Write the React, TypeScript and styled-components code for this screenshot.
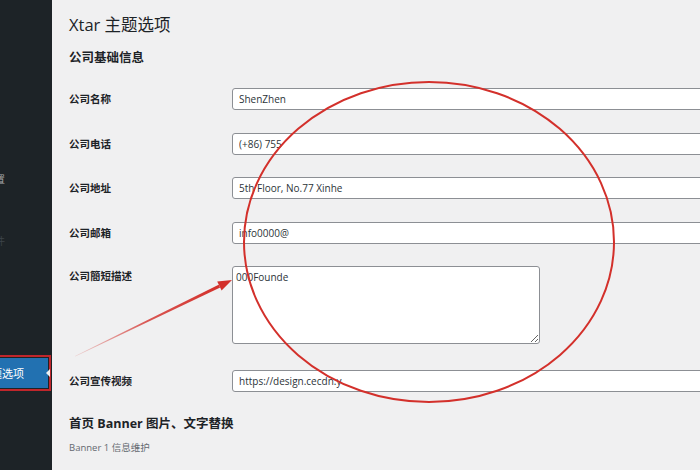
import styled, { createGlobalStyle } from "styled-components";

const GlobalStyle = createGlobalStyle`
  html,
  body {
    margin: 0;
    padding: 0;
    background: #f0f0f1;
    overflow: hidden;
  }

  * {
    box-sizing: border-box;
  }
`;

const FONT = `"Open Sans", "Noto Sans", "Noto Sans CJK SC", sans-serif`;
const RED = "#d3302b";

const fields = [
  { label: "公司名称", value: "ShenZhen" },
  { label: "公司电话", value: "(+86) 755" },
  { label: "公司地址", value: "5th Floor, No.77 Xinhe" },
  { label: "公司邮箱", value: "info0000@" },
];

const PageStyles = styled.div`
  position: relative;
  display: flex;
  width: 700px;
  height: 470px;
  overflow: hidden;
  font-family: ${FONT};
  color: #1d2327;
`;

const SidebarStyles = styled.nav`
  width: 52px;
  flex-shrink: 0;
  background: #1d2327;
  display: flex;
  flex-direction: column;
  padding-top: 170px;
  overflow: hidden;
`;

const FaintItem = styled.div<{ $gap: number; $tone: string }>`
  height: 16px;
  margin-top: ${(p) => p.$gap}px;
  display: flex;
  justify-content: flex-end;
  align-items: center;
  padding-right: 47px;
  font-size: 10px;
  white-space: nowrap;
  color: ${(p) => p.$tone};
`;

const CurrentItem = styled.div`
  position: relative;
  width: 48px;
  height: 30px;
  margin-top: 110px;
  background: #2271b1;
  color: #fff;
  font-size: 11px;
  display: flex;
  justify-content: flex-end;
  align-items: center;
  padding-right: 24px;
  white-space: nowrap;
  outline: 2px solid #c0262b;
  outline-offset: 1px;

  &::after {
    content: "";
    position: absolute;
    right: -2px;
    top: 50%;
    margin-top: -4px;
    border: 4px solid transparent;
    border-right-color: #f0f0f1;
  }
`;

const MainStyles = styled.main`
  flex: 1;
  padding: 14px 0 0 17px;
  background: #f0f0f1;
`;

const Title = styled.h1`
  margin: 0;
  font-size: 16.5px;
  line-height: 22px;
  font-weight: 400;
  color: #1d2327;
`;

const SectionTitle = styled.h2<{ $top: number }>`
  margin: ${(p) => p.$top}px 0 0;
  font-size: 12.5px;
  line-height: 18px;
  font-weight: 700;
  color: #1d2327;
`;

const SubText = styled.p`
  margin: 8.5px 0 0;
  font-size: 9.5px;
  line-height: 14px;
  color: #646970;
`;

const FormStyles = styled.div`
  margin-top: 10px;
  display: flex;
  flex-direction: column;
`;

const Row = styled.div<{ $tall?: boolean }>`
  display: grid;
  grid-template-columns: 163px 1fr;
  align-items: ${(p) => (p.$tall ? "start" : "center")};
  padding: ${(p) => (p.$tall ? "11px 0 15px" : "11px 0 11.5px")};
`;

const Label = styled.label<{ $tall?: boolean }>`
  font-size: 10.5px;
  font-weight: 700;
  line-height: 14px;
  color: #1d2327;
  padding-top: ${(p) => (p.$tall ? "3px" : "0")};
`;

const TextInput = styled.input`
  width: 480px;
  height: 22px;
  padding: 0 6px;
  border: 1px solid #8c8f94;
  border-radius: 3px;
  background: #fff;
  font-family: ${FONT};
  font-size: 10px;
  color: #2c3338;
  outline: none;
`;

const TextArea = styled.textarea`
  width: 308px;
  height: 78px;
  padding: 3px 3px;
  border: 1px solid #8c8f94;
  border-radius: 3px;
  background: #fff;
  font-family: ${FONT};
  font-size: 10px;
  line-height: 14px;
  color: #2c3338;
  outline: none;
  resize: both;
`;

const Overlay = styled.svg`
  position: absolute;
  left: 0;
  top: 0;
  pointer-events: none;
`;

const Annotation = () => (
  <Overlay width="700" height="470" viewBox="0 0 700 470">
    <defs>
      <linearGradient id="shaft" x1="75" y1="356" x2="220" y2="286" gradientUnits="userSpaceOnUse">
        <stop offset="0" stopColor={RED} stopOpacity="0.15" />
        <stop offset="0.5" stopColor={RED} stopOpacity="0.8" />
        <stop offset="1" stopColor={RED} />
      </linearGradient>
    </defs>
    <ellipse cx="429" cy="242" rx="185" ry="160" fill="none" stroke={RED} strokeWidth="2" />
    <polygon
      points="75,356 75.3,356.4 220.2,287.4 218.6,284.8"
      fill="url(#shaft)"
    />
    <polygon points="232,280 221.6,290.6 217.2,281.6" fill={RED} />
  </Overlay>
);

export default function App() {
  return (
    <>
      <GlobalStyle />
      <PageStyles>
        <SidebarStyles>
          <FaintItem $gap={0} $tone="#a7aaad">
            外观设置
          </FaintItem>
          <FaintItem $gap={46} $tone="#3c434a">
            工具插件
          </FaintItem>
          <CurrentItem>主题选项</CurrentItem>
        </SidebarStyles>
        <MainStyles>
          <Title>Xtar 主题选项</Title>
          <SectionTitle $top={13}>公司基础信息</SectionTitle>
          <FormStyles>
            {fields.map((field) => (
              <Row key={field.label}>
                <Label>{field.label}</Label>
                <TextInput readOnly defaultValue={field.value} />
              </Row>
            ))}
            <Row $tall>
              <Label $tall>公司簡短描述</Label>
              <TextArea readOnly defaultValue="000Founde" />
            </Row>
            <Row>
              <Label>公司宣传视频</Label>
              <TextInput readOnly defaultValue="https://design.cecdn.y" />
            </Row>
          </FormStyles>
          <SectionTitle $top={11}>首页 Banner 图片、文字替换</SectionTitle>
          <SubText>Banner 1 信息维护</SubText>
        </MainStyles>
        <Annotation />
      </PageStyles>
    </>
  );
}
